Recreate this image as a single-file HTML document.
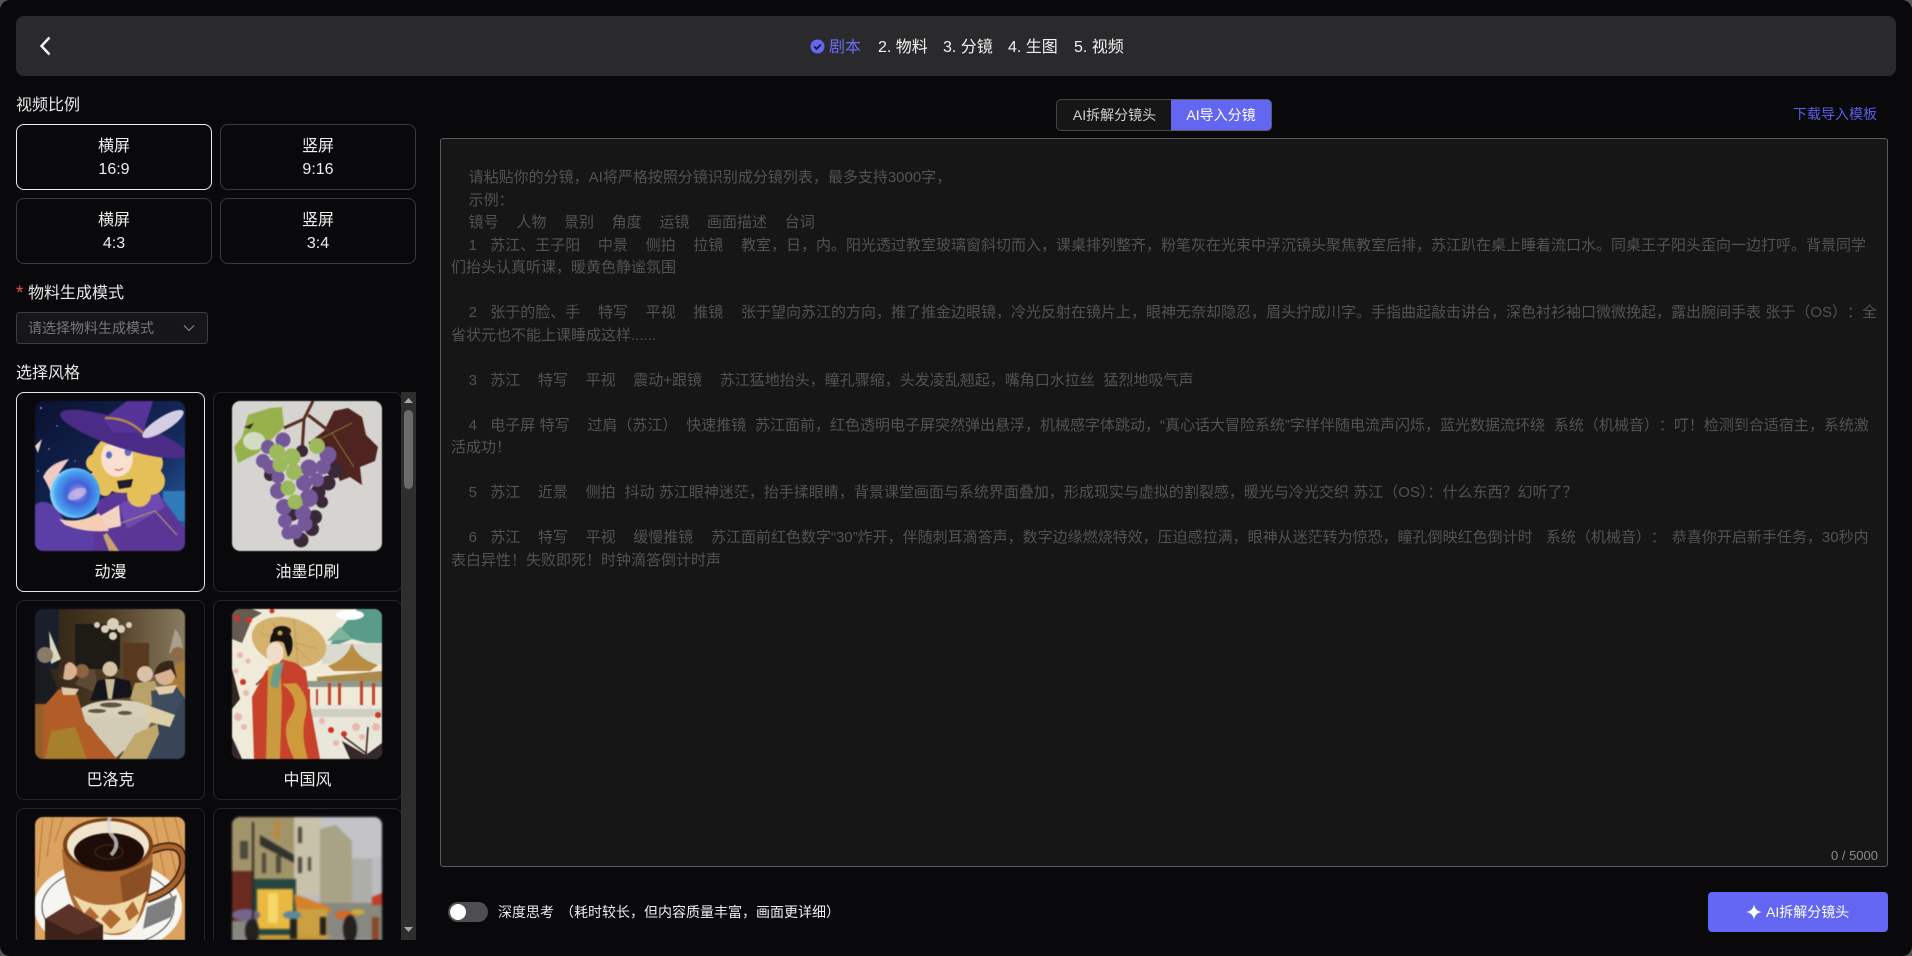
<!DOCTYPE html>
<html lang="zh-CN">
<head>
<meta charset="utf-8">
<title>分镜</title>
<style>
*{box-sizing:border-box}
html,body{margin:0;padding:0;width:1912px;height:956px;overflow:hidden;background:#555}
body,button{font-family:"Liberation Sans","Noto Sans CJK SC",sans-serif}
#app{position:absolute;left:0;top:0;width:1912px;height:956px;background:#09090c;border-radius:10px;overflow:hidden;color:#eee}
.a{position:absolute;white-space:nowrap}
.hd{left:16px;top:16px;width:1880px;height:60px;background:#2a2a2c;border-radius:8px}
.st{top:36px;font-size:16px;line-height:24px;color:#f2f2f2}
.lab{font-size:16px;line-height:24px;color:#e8e8e8}
.rc{width:196px;height:66px;border:1px solid #3a3a3e;border-radius:8px;text-align:center;font-size:16px;line-height:23px;padding-top:10px;color:#eee}
.rc.on{border-color:#eee}
.sel{left:16px;top:312px;width:192px;height:32px;background:#161618;border:1px solid #3c3c40;border-radius:3px;font-size:14px;line-height:30px;padding-left:11px;color:#77777a}
.list{left:16px;top:392px;width:385px;height:548px;overflow:hidden}
.card{position:absolute;width:189px;height:200px;border:1px solid #26262a;border-radius:8px}
.card.on{border-color:#e6e6e6}
.card svg{position:absolute;left:18px;top:8px;width:150px;height:150px;border-radius:8px;display:block;filter:blur(.6px)}
.card.last{height:132px;border-bottom:0;border-radius:8px 8px 0 0}
.card.last svg{height:123px;border-radius:8px 8px 0 0}
.card span{position:absolute;left:0;right:0;top:168px;text-align:center;font-size:16px;line-height:24px;color:#eee}
.sb{left:401px;top:392px;width:15px;height:548px;background:#2e2e2e}
.th{left:3px;top:18px;width:9px;height:79px;border-radius:5px;background:#6b6b6b;position:absolute}
.tab{top:99px;height:32px;font-size:14px;line-height:30px;text-align:center}
.ta{left:440px;top:138px;width:1448px;height:729px;background:#161616;border:1px solid #5c5c5c;border-radius:3px}
.tx{left:451px;top:167px;font-size:15px;line-height:22.5px;color:#525252;white-space:pre;word-spacing:.25px;text-spacing-trim:space-all}
</style>
</head>
<body>
<div id="app">

<div class="a hd"></div>
<svg class="a" style="left:36px;top:34px" width="18" height="24" viewBox="0 0 18 24"><path d="M13.5 3.5 L5.5 12 L13.5 20.5" fill="none" stroke="#fff" stroke-width="2.4"/></svg>
<svg class="a" style="left:810px;top:39px" width="15" height="15" viewBox="0 0 15 15"><circle cx="7.5" cy="7.5" r="7" fill="#6366f1"/><path d="M4.3 7.6 L6.6 9.9 L10.8 5.6" fill="none" stroke="#16162a" stroke-width="1.7"/></svg>
<span class="a st" style="left:829px;color:#6a6df0">剧本</span>
<span class="a st" style="left:878px">2. 物料</span>
<span class="a st" style="left:943px">3. 分镜</span>
<span class="a st" style="left:1008px">4. 生图</span>
<span class="a st" style="left:1074px">5. 视频</span>

<span class="a lab" style="left:16px;top:94px">视频比例</span>
<div class="a rc on" style="left:16px;top:124px">横屏<br>16:9</div>
<div class="a rc" style="left:220px;top:124px">竖屏<br>9:16</div>
<div class="a rc" style="left:16px;top:198px">横屏<br>4:3</div>
<div class="a rc" style="left:220px;top:198px">竖屏<br>3:4</div>

<span class="a" style="left:16px;top:282px;font-size:19px;line-height:24px;color:#e0524f">*</span>
<span class="a lab" style="left:28px;top:282px">物料生成模式</span>
<div class="a sel">请选择物料生成模式</div>
<svg class="a" style="left:183px;top:323px" width="12" height="10" viewBox="0 0 12 10"><path d="M1 2.5 L6 7.5 L11 2.5" fill="none" stroke="#8a8a8a" stroke-width="1.1"/></svg>

<span class="a lab" style="left:16px;top:362px">选择风格</span>

<div class="a list">
  <div class="card on" style="left:0;top:0">
    <svg viewBox="0 0 150 150">
      <defs>
        <linearGradient id="g1" x1="0" y1="0" x2="1" y2="1"><stop offset="0" stop-color="#0a1230"/><stop offset=".6" stop-color="#152a5c"/><stop offset="1" stop-color="#2a6ab0"/></linearGradient>
        <radialGradient id="orb" cx=".55" cy=".5" r=".55"><stop offset="0" stop-color="#b89ae0"/><stop offset=".4" stop-color="#3f62d8"/><stop offset=".8" stop-color="#48a4f2"/><stop offset="1" stop-color="#a0e0fc"/></radialGradient>
      </defs>
      <rect width="150" height="150" fill="url(#g1)"/>
      <g fill="#cfe0ff"><circle cx="6" cy="7" r=".9"/><circle cx="22" cy="25" r=".6"/><circle cx="14" cy="48" r=".7"/><circle cx="40" cy="60" r=".6"/><circle cx="3" cy="70" r=".6"/></g>
      <path d="M0 45 L7 38 L3 52 Z" fill="#e8d8c8"/>
      <rect x="128" y="90" width="22" height="30" fill="#2f7ab8"/>
      <path d="M0 104 Q10 96 22 108 L30 120 L60 130 L70 150 H0 Z" fill="#5b3ea6"/>
      <path d="M22 108 Q14 85 8 76 Q14 62 34 58 L24 72 L32 86 Z" fill="#efc9c4"/>
      <path d="M62 100 L112 76 L135 108 L150 128 V150 H58 Z" fill="#5a3796"/>
      <path d="M84 104 L120 84 L130 106 L92 128 Z" fill="#6f49b2"/>
      <path d="M86 122 L120 110 L142 134" fill="none" stroke="#b89a6a" stroke-width="1"/>
      <path d="M65 115 L84 104 L86 125 L72 128 Z" fill="#f4d3c0"/>
      <g fill="#e5bf58">
        <ellipse cx="88" cy="62" rx="32" ry="30"/><circle cx="60" cy="62" r="9"/><circle cx="62" cy="78" r="8"/><circle cx="70" cy="88" r="7"/>
        <circle cx="114" cy="62" r="14"/><circle cx="116" cy="80" r="14"/><circle cx="104" cy="94" r="12"/><circle cx="92" cy="82" r="9"/>
      </g>
      <ellipse cx="82" cy="57" rx="16" ry="19" fill="#f9e0d0"/>
      <path d="M64 46 Q76 30 100 36 L102 58 Q88 38 64 46 Z" fill="#e9c766"/>
      <ellipse cx="74" cy="54" rx="3" ry="3.6" fill="#5670c4"/><ellipse cx="93" cy="51" rx="3.4" ry="4" fill="#5670c4"/>
      <path d="M80 68 Q84 71 88 67" fill="none" stroke="#c66" stroke-width="1.2"/>
      <path d="M82 80 L98 78 L96 86 L84 88 Z" fill="#1d1b2c"/>
      <ellipse cx="88" cy="33" rx="66" ry="14" transform="rotate(18 88 33)" fill="#4a2b85"/>
      <path d="M68 18 L92 0 H118 L108 32 L78 32 Z" fill="#553399"/>
      <path d="M70 17 Q92 16 108 32" fill="none" stroke="#b08b48" stroke-width="2.5"/>
      <ellipse cx="128" cy="23" rx="24" ry="7" transform="rotate(-32 128 23)" fill="#d5cde4"/>
      <circle cx="40" cy="92" r="25" fill="url(#orb)"/>
      <ellipse cx="42" cy="93" rx="10" ry="5" fill="#d5bde8" opacity=".7" transform="rotate(-25 42 93)"/>
      <path d="M24 118 Q40 122 55 116 L64 112 L74 130 Q50 132 30 124 Z" fill="#f5cdb5"/>
      <path d="M72 132 L84 150 H74 L68 134 Z" fill="#c9a070"/>
    </svg>
    <span>动漫</span>
  </div>

  <div class="card" style="left:197px;top:0">
    <svg viewBox="0 0 150 150">
      <rect width="150" height="150" fill="#d5d4d1"/>
      <path d="M6 62 L2 46 L10 36 L16 14 L38 7 L50 6 L52 26 L40 38 L26 52 Z" fill="#97b24c"/>
      <ellipse cx="22" cy="40" rx="11" ry="9" fill="#d2dcc0"/>
      <path d="M12 26 L22 22 L18 28 Z" fill="#43241d"/>
      <path d="M76 42 L92 30 L102 10 L116 7 L130 16 L134 34 L146 46 L143 60 L128 66 L130 84 L118 76 L108 80 L96 54 Z" fill="#4e2320"/>
      <path d="M100 32 L120 22 M100 32 L122 66 M100 32 L88 38" stroke="#8d8a3a" stroke-width=".8" fill="none"/>
      <path d="M81 0 L72 18 L70 52 M72 18 L52 27 M76 14 L97 30" stroke="#5b2c1f" stroke-width="3" fill="none"/>
      <g fill="#3a2838"><circle cx="103" cy="69" r="8"/><circle cx="96" cy="82" r="7.5"/><circle cx="86" cy="91" r="7.5"/><circle cx="90" cy="101" r="6"/><circle cx="83" cy="116" r="7"/><circle cx="80" cy="128" r="7"/><circle cx="69" cy="139" r="7.5"/><circle cx="38" cy="74" r="6"/><circle cx="70" cy="50" r="6"/><circle cx="60" cy="112" r="8"/></g>
      <g fill="#75589a"><circle cx="51" cy="39" r="7.5"/><circle cx="36" cy="46" r="7"/><circle cx="31" cy="60" r="7"/><circle cx="38" cy="66" r="7"/><circle cx="77" cy="67" r="8.5"/><circle cx="91" cy="66" r="7.5"/><circle cx="96" cy="54" r="8.5"/><circle cx="46" cy="76" r="6.5"/><circle cx="85" cy="79" r="7"/><circle cx="72" cy="82" r="8"/><circle cx="46" cy="90" r="8"/><circle cx="77" cy="97" r="9"/><circle cx="52" cy="106" r="8"/><circle cx="71" cy="112" r="8"/><circle cx="53" cy="120" r="7"/><circle cx="73" cy="123" r="7.5"/><circle cx="63" cy="131" r="7.5"/><circle cx="56" cy="132" r="6.5"/></g>
      <g fill="#9cb95c"><circle cx="45" cy="51" r="8"/><circle cx="60" cy="56" r="8.5"/><circle cx="48" cy="64" r="7.5"/><circle cx="85" cy="45" r="8"/><circle cx="62" cy="71" r="8"/><circle cx="56" cy="87" r="7.5"/><circle cx="63" cy="101" r="7.5"/></g>
    </svg>
    <span>油墨印刷</span>
  </div>

  <div class="card" style="left:0;top:208px">
    <svg viewBox="0 0 150 150">
      <defs><linearGradient id="g3" x1="0" y1="0" x2="1" y2="0"><stop offset="0" stop-color="#2a2014"/><stop offset=".5" stop-color="#4e3c24"/><stop offset="1" stop-color="#8a7c60"/></linearGradient></defs>
      <rect width="150" height="150" fill="url(#g3)"/>
      <rect x="40" y="15" width="45" height="45" fill="#1e1a14"/>
      <rect x="88" y="34" width="26" height="46" fill="#58381e"/>
      <rect x="0" y="0" width="24" height="60" fill="#19202c"/>
      <path d="M14 22 L26 50 L16 55 Z" fill="#ddd8c0"/>
      <g fill="#d8d0b8"><circle cx="62" cy="16" r="3"/><circle cx="70" cy="20" r="4"/><circle cx="78" cy="15" r="6"/><circle cx="86" cy="20" r="4"/><circle cx="94" cy="16" r="3"/><circle cx="78" cy="27" r="4"/></g>
      <path d="M140 20 q8 8 8 24 H134 Z" fill="#a8a08a"/>
      <path d="M0 52 L10 50 L22 78 L18 100 L0 96 Z" fill="#191b20"/><circle cx="10" cy="46" r="8" fill="#8a7a68"/>
      <path d="M128 62 L150 52 V85 L140 90 Z" fill="#a87b3a"/><circle cx="143" cy="45" r="7" fill="#8f6a44"/>
      <path d="M40 75 L50 60 H60 L64 85 Z" fill="#5d4a35"/><circle cx="47" cy="62" r="7" fill="#8d6240"/>
      <path d="M55 92 L62 72 L78 68 L95 72 L98 88 Z" fill="#14141c"/><path d="M70 70 L80 70 L77 90 H73 Z" fill="#c8bc98"/><circle cx="75" cy="60" r="7.5" fill="#d6c0a4"/>
      <path d="M95 90 L100 74 L120 72 L125 90 L110 100 Z" fill="#b9a26a"/><circle cx="110" cy="65" r="8" fill="#d9c2a8"/>
      <path d="M0 95 H12 L14 150 H0 Z" fill="#8f6028"/>
      <ellipse cx="82" cy="106" rx="40" ry="15" fill="#d8d0bc"/>
      <path d="M48 108 H118 L102 145 L88 142 L80 150 Z" fill="#d2cbb6"/>
      <g fill="#5e5640"><ellipse cx="62" cy="102" rx="9" ry="2"/><ellipse cx="90" cy="104" rx="7" ry="2"/><ellipse cx="76" cy="96" rx="11" ry="2.5"/></g>
      <path d="M8 150 L8 98 L24 80 L42 85 L50 112 L82 150 Z" fill="#b25c28"/>
      <path d="M10 150 L16 122 L40 118 L52 150 Z" fill="#a87f2c"/>
      <circle cx="33" cy="62" r="9" fill="#d9b090"/><path d="M22 62 Q24 48 38 50 L30 56 L28 70 Z" fill="#3e2a1a"/>
      <path d="M26 78 L44 80 L40 86 L28 86 Z" fill="#dcc8a8"/>
      <path d="M84 150 L100 125 L122 115 L135 128 L118 150 Z" fill="#c0a86c"/>
      <path d="M112 150 L124 125 L120 100 L130 85 L142 78 L150 90 V150 Z" fill="#384556"/>
      <path d="M116 82 L140 78 L148 90 L138 110 L118 108 Z" fill="#3e4c60"/>
      <path d="M112 96 L140 106 L135 118 L110 112 Z" fill="#dccfa8"/>
      <circle cx="130" cy="66" r="10" fill="#d8b092"/><path d="M119 66 Q122 50 138 52 L142 70 L136 60 Z" fill="#3a2618"/>
      <path d="M120 78 L142 76 L138 84 L124 86 Z" fill="#e0cca8"/>
    </svg>
    <span>巴洛克</span>
  </div>

  <div class="card" style="left:197px;top:208px">
    <svg viewBox="0 0 150 150">
      <rect width="150" height="150" fill="#f0ead9"/>
      <path d="M95 40 L110 18 L125 0 H150 V34 L135 34 L120 30 Z" fill="#5a9c8a"/>
      <path d="M95 32 L108 18 L120 30 Z" fill="#7fb3a0"/>
      <ellipse cx="118" cy="6" rx="14" ry="5" fill="#fff"/>
      <path d="M90 35 H150 V55 H90 Z" fill="#d9dad0"/>
      <path d="M96 57 Q115 50 120 34 Q125 50 146 56 L138 62 H102 Z" fill="#b98d42"/>
      <path d="M85 68 L150 62 V72 H85 Z" fill="#a98a4a"/>
      <rect x="70" y="72" width="80" height="6" fill="#8d9a8c"/>
      <g fill="#c2452b"><rect x="96" y="74" width="3" height="24"/><rect x="106" y="74" width="3" height="24"/><rect x="128" y="72" width="3" height="26"/><rect x="140" y="74" width="3" height="24"/><rect x="76" y="80" width="2" height="18"/><rect x="84" y="80" width="2" height="18"/></g>
      <path d="M70 96 H150 V150 H70 Z" fill="#e9e6da"/>
      <rect x="80" y="100" width="70" height="8" fill="#cfd0c2"/>
      <ellipse cx="57" cy="33" rx="38" ry="24" transform="rotate(15 57 33)" fill="#d4b26e"/>
      <path d="M28 24 L85 40 M40 14 L78 52 M62 10 L66 56" stroke="#b28e4c" stroke-width=".6"/>
      <path d="M24 76 L40 60 L46 52" stroke="#5a3a24" stroke-width="1.5" fill="none"/>
      <path d="M22 150 L20 88 L34 62 L48 50 L64 54 L74 62 L78 96 L88 150 Z" fill="#c8412a"/>
      <path d="M36 58 L48 52 L50 90 L48 150 L34 150 Z" fill="#c99a3f"/>
      <path d="M50 75 Q70 90 58 108 Q48 122 62 150 H76 Q68 124 74 106 Q78 88 64 74 Z" fill="#cf9a3c"/>
      <path d="M42 58 L52 52 L46 80 L38 76 Z" fill="#6a9c8c"/>
      <ellipse cx="43" cy="44" rx="8.5" ry="11" fill="#f2dcc8"/>
      <path d="M38 34 Q38 22 48 18 Q58 22 60 30 Q62 42 56 48 L52 34 Q46 30 38 34 Z" fill="#16120f"/>
      <ellipse cx="50" cy="22" rx="9" ry="5" fill="#1a1512"/><circle cx="48" cy="24" r="2.5" fill="#c7a04a"/>
      <path d="M0 30 L10 34 L20 10 L30 4 L20 0 H0 Z" fill="#3a2a22" opacity=".75"/>
      <path d="M0 60 L8 90 L0 100 Z" fill="#32261f"/>
      <path d="M0 128 L10 150 H0 Z M110 132 L134 146 L150 134 V150 H118 Z" fill="#34282a"/>
      <path d="M134 146 L136 118 M112 128 L135 145" stroke="#3a2a22" stroke-width="1.6" fill="none"/>
      <g fill="#cf3626"><circle cx="5" cy="9" r="3"/><circle cx="17" cy="11" r="3"/><circle cx="40" cy="2" r="2.5"/><circle cx="11" cy="73" r="3"/><circle cx="112" cy="125" r="3"/><circle cx="99" cy="121" r="3"/><circle cx="146" cy="106" r="3"/></g>
      <g fill="#e9b9b0"><circle cx="8" cy="46" r="3"/><circle cx="16" cy="52" r="2.5"/><circle cx="4" cy="62" r="2.5"/><circle cx="14" cy="84" r="3"/><circle cx="6" cy="108" r="4"/><circle cx="12" cy="118" r="3"/><circle cx="90" cy="112" r="3"/><circle cx="124" cy="118" r="4"/><circle cx="130" cy="128" r="3"/><circle cx="144" cy="118" r="4"/><circle cx="104" cy="134" r="3"/></g>
    </svg>
    <span>中国风</span>
  </div>

  <div class="card last" style="left:0;top:416px">
    <svg viewBox="0 0 150 123">
      <rect width="150" height="123" fill="#dba35f"/>
      <g stroke="#b87a3a" stroke-width="1" fill="none"><path d="M8 0 L3 60"/><path d="M18 0 L12 40"/><path d="M28 0 L20 25"/><path d="M118 0 L130 60"/><path d="M128 0 L142 60"/><path d="M140 0 L150 40"/></g>
      <ellipse cx="73" cy="90" rx="74" ry="47" fill="#f5f5f2"/>
      <ellipse cx="73" cy="90" rx="66" ry="40" fill="none" stroke="#222" stroke-width=".8"/>
      <path d="M112 90 L142 78 L136 100 L108 112 Z" fill="#7e7e7e"/>
      <path d="M110 36 Q150 18 148 48 Q144 72 112 82" fill="none" stroke="#3a1c0c" stroke-width="8"/>
      <path d="M110 36 Q150 18 148 48 Q144 72 112 82" fill="none" stroke="#a8642f" stroke-width="5"/>
      <path d="M27 32 C30 90 50 118 80 118 C108 118 116 80 118 32 Z" fill="#ad6a33"/>
      <path d="M85 60 L118 45 L112 85 L90 100 Z" fill="#8a4f24"/>
      <path d="M38 78 Q72 100 112 74 L100 110 Q78 122 58 112 Z" fill="#efd9a8"/>
      <g fill="#b06a30"><path d="M55 90 L64 100 L55 106 L48 98 Z"/><path d="M75 92 L86 102 L76 112 L66 102 Z"/><path d="M98 84 L104 96 L94 104 L90 94 Z"/></g>
      <ellipse cx="73" cy="28" rx="45" ry="27" fill="#7a3f16"/>
      <ellipse cx="73" cy="28" rx="41" ry="24" fill="#f0e4cc"/>
      <ellipse cx="74" cy="35" rx="35" ry="19" fill="#1d0c07"/>
      <ellipse cx="74" cy="35" rx="14" ry="7" fill="none" stroke="#43271c" stroke-width="1.2"/>
      <path d="M75 0 Q70 12 80 22 Q84 30 76 38" fill="none" stroke="#d8d8d8" stroke-width="4" opacity=".75"/>
      <path d="M10 102 L34 87 L68 108 V124 H10 Z" fill="#3e2118"/>
      <path d="M10 102 L34 87 L68 108 L42 118 Z" fill="#5b3328"/>
    </svg>
  </div>

  <div class="card last" style="left:197px;top:416px">
    <svg viewBox="0 0 150 123" style="filter:blur(1px)">
      <rect width="150" height="123" fill="#bcbcc0"/>
      <rect x="85" y="0" width="65" height="40" fill="#c4c4c8"/>
      <rect x="118" y="42" width="22" height="50" fill="#aeaea8"/>
      <path d="M88 12 L104 8 L120 24 V90 H88 Z" fill="#a8a386"/>
      <rect x="60" y="0" width="28" height="78" fill="#c9c2aa"/>
      <rect x="0" y="0" width="62" height="72" fill="#a2946a"/>
      <g fill="#4e4a3c"><rect x="8" y="24" width="8" height="18"/><rect x="30" y="36" width="4" height="20"/><rect x="44" y="38" width="5" height="18"/><rect x="66" y="10" width="4" height="16"/><rect x="66" y="40" width="4" height="16"/><rect x="76" y="40" width="3" height="14"/></g>
      <rect x="42" y="4" width="6" height="18" fill="#b88a40"/>
      <path d="M28 18 L62 38 V46 L28 28 Z" fill="#33322c"/>
      <rect x="0" y="86" width="150" height="36" fill="#87887f"/>
      <rect x="0" y="54" width="20" height="50" fill="#6a2a20"/>
      <rect x="20" y="62" width="44" height="60" fill="#26463e"/>
      <rect x="25" y="72" width="36" height="40" fill="#e9b840"/>
      <rect x="36" y="76" width="10" height="30" fill="#f3d868"/>
      <path d="M62 77 L98 90 V96 H64 Z" fill="#d4832c"/>
      <rect x="65" y="92" width="30" height="26" fill="#caa040"/>
      <path d="M25 118 H100 L90 123 H30 Z" fill="#c99c38"/>
      <path d="M140 80 L150 76 V88 H140 Z" fill="#c43c28"/>
      <ellipse cx="14" cy="98" rx="14" ry="6" fill="#75658a"/>
      <ellipse cx="60" cy="98" rx="9" ry="4" fill="#5a88a0"/>
      <ellipse cx="113" cy="98" rx="10" ry="4.5" fill="#d4682a"/>
      <ellipse cx="126" cy="95" rx="7" ry="3" fill="#c8aa3a"/>
      <g fill="#24201e"><ellipse cx="20" cy="114" rx="7" ry="12"/><rect x="58" y="102" width="7" height="20"/><rect x="88" y="100" width="6" height="18"/><ellipse cx="118" cy="112" rx="7" ry="14"/></g>
      <rect x="140" y="100" width="7" height="24" fill="#8a4a2a"/>
      <rect x="20" y="5" width="2" height="100" fill="#2a2a24"/>
    </svg>
  </div>
</div>

<div class="a sb">
  <svg class="a" style="left:3px;top:5px" width="9" height="7" viewBox="0 0 9 7"><path d="M4.5 1 L9 6 H0 Z" fill="#a8a8a8"/></svg>
  <div class="th"></div>
  <svg class="a" style="left:3px;top:534px" width="9" height="7" viewBox="0 0 9 7"><path d="M4.5 6 L9 1 H0 Z" fill="#a8a8a8"/></svg>
</div>

<div class="a tab" style="left:1056px;width:116px;background:#161616;border:1px solid #444;border-right:0;border-radius:5px 0 0 5px;color:#cfcfcf">AI拆解分镜头</div>
<div class="a tab" style="left:1171px;width:101px;background:#6366f1;border:1px solid #5a5a6a;border-left:0;border-radius:0 5px 5px 0;color:#fff">AI导入分镜</div>
<span class="a" style="left:1793px;top:104px;font-size:14px;line-height:20px;color:#5a5ee6">下载导入模板</span>

<div class="a ta"></div>
<div class="a tx">    请粘贴你的分镜，AI将严格按照分镜识别成分镜列表，最多支持3000字，
    示例：
    镜号    人物    景别    角度    运镜    画面描述    台词
    1   苏江、王子阳    中景    侧拍    拉镜    教室，日，内。阳光透过教室玻璃窗斜切而入，课桌排列整齐，粉笔灰在光束中浮沉镜头聚焦教室后排，苏江趴在桌上睡着流口水。同桌王子阳头歪向一边打呼。背景同学
们抬头认真听课，暖黄色静谧氛围

    2   张于的脸、手    特写    平视    推镜    张于望向苏江的方向，推了推金边眼镜，冷光反射在镜片上，眼神无奈却隐忍，眉头拧成川字。手指曲起敲击讲台，深色衬衫袖口微微挽起，露出腕间手表 张于（OS）：全
省状元也不能上课睡成这样......

    3   苏江    特写    平视    震动+跟镜    苏江猛地抬头，瞳孔骤缩，头发凌乱翘起，嘴角口水拉丝  猛烈地吸气声

    4   电子屏 特写    过肩（苏江）  快速推镜  苏江面前，红色透明电子屏突然弹出悬浮，机械感字体跳动，“真心话大冒险系统”字样伴随电流声闪烁，蓝光数据流环绕  系统（机械音）：叮！检测到合适宿主，系统激
活成功！

    5   苏江    近景    侧拍  抖动 苏江眼神迷茫，抬手揉眼睛，背景课堂画面与系统界面叠加，形成现实与虚拟的割裂感，暖光与冷光交织 苏江（OS<span style="margin-right:-7.5px">）</span>：什么东西？幻听了？

    6   苏江    特写    平视    缓慢推镜    苏江面前红色数字“30”炸开，伴随刺耳滴答声，数字边缘燃烧特效，压迫感拉满，眼神从迷茫转为惊恐，瞳孔倒映红色倒计时   系统（机械音）：<span style="margin-left:6px">恭喜你开启新手任务，30秒内</span>
表白异性！失败即死！时钟滴答倒计时声</div>
<span class="a" style="left:1831px;top:847px;font-size:13px;line-height:18px;color:#8a8a8a">0 / 5000</span>

<div class="a" style="left:448px;top:902px;width:40px;height:20px;border-radius:10px;background:#4f4f52"></div>
<div class="a" style="left:450px;top:904px;width:16px;height:16px;border-radius:50%;background:#fff"></div>
<span class="a" style="left:498px;top:902px;font-size:14px;line-height:20px;color:#e8e8e8">深度思考</span>
<span class="a" style="left:560px;top:902px;font-size:14px;line-height:20px;color:#eee">（耗时较长，但内容质量丰富，画面更详细）</span>

<div class="a" style="left:1708px;top:892px;width:180px;height:40px;background:#6366f1;border-radius:4px"></div>
<svg class="a" style="left:1746px;top:904px" width="16" height="16" viewBox="0 0 16 16"><path d="M8 0 Q8.8 7 16 8 Q8.8 9 8 16 Q7.2 9 0 8 Q7.2 7 8 0 Z" fill="#fff"/></svg>
<span class="a" style="left:1766px;top:902px;font-size:14px;line-height:20px;color:#fff">AI拆解分镜头</span>

</div>
</body>
</html>
